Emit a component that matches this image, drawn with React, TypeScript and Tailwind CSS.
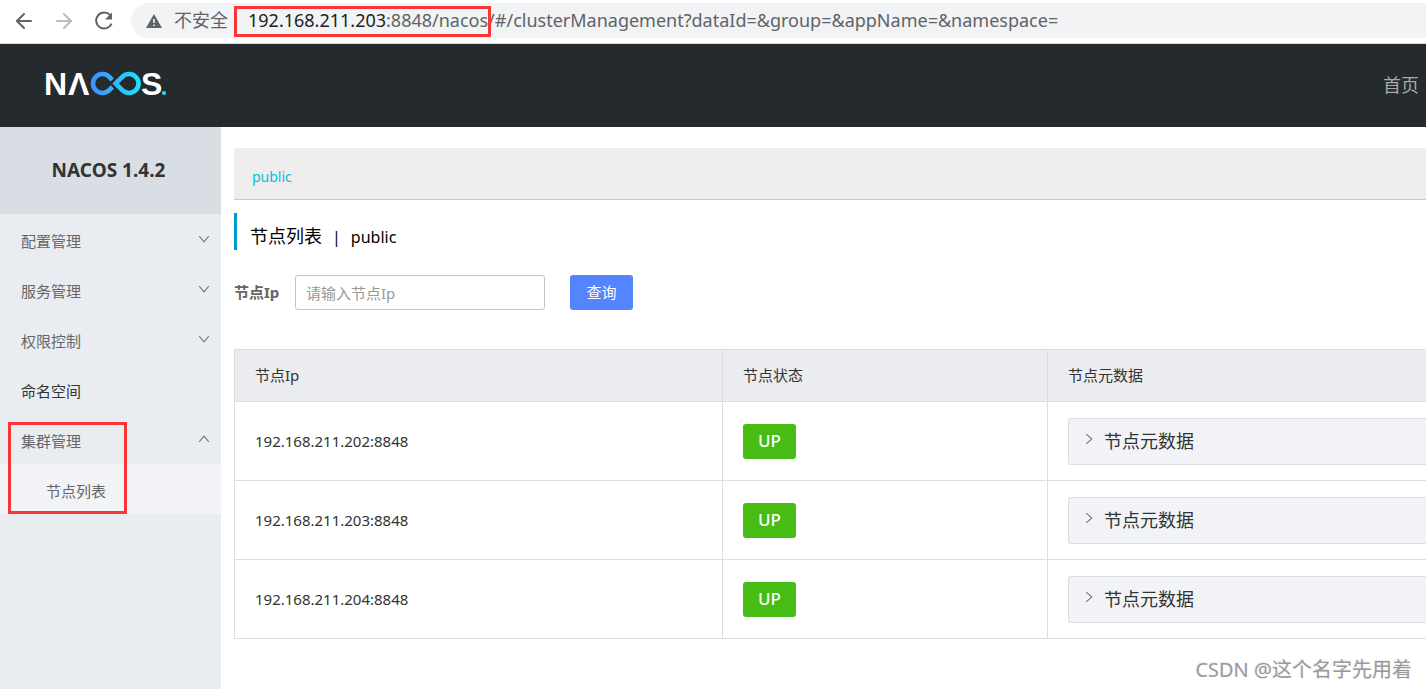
import React from 'react';
import { ArrowLeft, ArrowRight } from 'lucide-react';

interface MenuItem {
  label: string;
  state?: 'open' | 'closed';
  children?: string[];
}

interface ClusterNode {
  ip: string;
  status: string;
}

const menu: MenuItem[] = [
  { label: '配置管理', state: 'closed' },
  { label: '服务管理', state: 'closed' },
  { label: '权限控制', state: 'closed' },
  { label: '命名空间' },
  { label: '集群管理', state: 'open', children: ['节点列表'] },
];

const nodes: ClusterNode[] = [
  { ip: '192.168.211.202:8848', status: 'UP' },
  { ip: '192.168.211.203:8848', status: 'UP' },
  { ip: '192.168.211.204:8848', status: 'UP' },
];

const Chevron: React.FC<{ className?: string }> = ({ className = '' }) => (
  <svg
    width="12"
    height="12"
    viewBox="0 0 12 12"
    fill="none"
    stroke="currentColor"
    strokeWidth="1.1"
    className={`shrink-0 text-[#777] ${className}`}
  >
    <path d="M1.2 3.2 L6 8.8 L10.8 3.2" />
  </svg>
);

const NacosLogo: React.FC = () => (
  <svg width="128" height="44" viewBox="-2 -8 128 44" role="img" aria-label="NACOS">
    <defs>
      <linearGradient id="loop" gradientUnits="userSpaceOnUse" x1="46" y1="0" x2="96" y2="0">
        <stop offset="0" stopColor="#418dff" />
        <stop offset="1" stopColor="#1ce4f8" />
      </linearGradient>
    </defs>
    <g fill="#fff" fontFamily="Liberation Sans, sans-serif" fontWeight="700" fontSize="32">
      <text x="-1" y="25">N</text>
      <text x="23" y="25">Λ</text>
      <text x="96" y="25">S</text>
    </g>
    <g fill="none" stroke="url(#loop)" strokeWidth="4.6">
      <path d="M67.2 9.8 L64.2 6.8 A9.5 9.5 0 1 0 64.2 20.2 L67.4 17" />
      <path d="M70.6 13.5 L77.3 6.8 A9.5 9.5 0 1 1 77.3 20.2 Z" />
    </g>
    <circle cx="119" cy="23" r="2.1" fill="#1ce4f8" />
  </svg>
);

const BrowserBar: React.FC = () => (
  <div className="flex h-11 items-start border-b border-[#dadce0] bg-white pt-[3px] pl-3">
    <div className="flex h-[35px] w-[119px] shrink-0 items-center gap-4 text-[#5f6368]">
      <button type="button" aria-label="Back">
        <ArrowLeft size={24} strokeWidth={2} />
      </button>
      <button type="button" aria-label="Forward" className="text-[#babcbe]">
        <ArrowRight size={24} strokeWidth={2} />
      </button>
      <button type="button" aria-label="Reload">
        <svg width="24" height="24" viewBox="0 0 24 24" fill="none" stroke="currentColor" strokeWidth="2">
          <path d="M18.2 6.2 A8 8 0 1 0 19.6 14.6" />
          <path d="M20 3.5 V10.5 H13 Z" fill="currentColor" stroke="none" />
        </svg>
      </button>
    </div>
    <div className="relative flex h-[35px] min-w-0 flex-1 items-center rounded-l-full bg-[#f1f3f4] pl-[15px] text-[18px] whitespace-nowrap text-[#5f6368]">
      <button type="button" className="flex items-center gap-3">
        <svg width="16" height="14" viewBox="0 0 16 14">
          <path d="M8 0 L16 14 H0 Z" fill="#5f6368" />
          <path d="M7.2 5 H8.8 V9 H7.2 Z M7.2 10.4 H8.8 V12 H7.2 Z" fill="#f1f3f4" />
        </svg>
        不安全
      </button>
      <span className="ml-5">
        <span className="text-[#202124]">192.168.211.203</span>
        :8848/nacos/#/clusterManagement?dataId=&amp;group=&amp;appName=&amp;namespace=
      </span>
      <div className="absolute top-[3px] left-[103px] h-[31px] w-[257px] border-3 border-[#fb3536]" />
    </div>
  </div>
);

const Sidebar: React.FC = () => (
  <aside className="w-[221px] shrink-0 bg-[#e9edf2]">
    <h1 className="flex h-[87px] items-center justify-center bg-[#d9dde4] pr-1 text-[19px] font-bold text-[#333]">
      NACOS 1.4.2
    </h1>
    <ul className="text-[15px] text-[#666]">
      {menu.map((item) => (
        <li key={item.label} className="relative">
          <a
            href="#"
            className={`flex h-[50px] items-center justify-between pr-[11px] pl-[21px] ${item.state ? '' : 'text-[#333]'}`}
          >
            <span className="pt-1">{item.label}</span>
            {item.state === 'closed' && <Chevron />}
            {item.state === 'open' && <Chevron className="rotate-180" />}
          </a>
          {item.children && (
            <>
              <ul className="bg-[#f2f3f7]">
                {item.children.map((child) => (
                  <li key={child}>
                    <a href="#" className="flex h-[50px] items-center pl-[46px]">
                      <span className="pt-1">{child}</span>
                    </a>
                  </li>
                ))}
              </ul>
              <div className="absolute top-2 left-2 h-[92px] w-[119px] border-3 border-[#fb3536]" />
            </>
          )}
        </li>
      ))}
    </ul>
  </aside>
);

const NodeTable: React.FC = () => (
  <table className="mt-[39px] w-full table-fixed border-collapse border-l border-[#dcdee3] text-left text-[15px] text-[#333]">
    <thead>
      <tr className="h-[52px] border-y border-[#dcdee3] bg-[#ebecf0]">
        <th className="w-[488px] px-5 font-normal">节点Ip</th>
        <th className="w-[325px] border-x border-[#dcdee3] px-5 font-normal">节点状态</th>
        <th className="pl-5 font-normal">节点元数据</th>
      </tr>
    </thead>
    <tbody>
      {nodes.map((node) => (
        <tr key={node.ip} className="h-[79px] border-b border-[#dcdee3]">
          <td className="px-5">{node.ip}</td>
          <td className="border-x border-[#dcdee3] px-5">
            <span className="flex h-[35px] w-[53px] items-center justify-center rounded-[3px] bg-[#46bc15] text-[17px] font-medium text-white">
              {node.status}
            </span>
          </td>
          <td className="pl-5">
            <button
              type="button"
              className="flex h-[47px] w-full items-center gap-[9px] rounded-l-[3px] border border-r-0 border-[#dcdee3] bg-[#f2f3f7] pl-[14px] text-[18px]"
            >
              <Chevron className="mb-1 -rotate-90" />
              节点元数据
            </button>
          </td>
        </tr>
      ))}
    </tbody>
  </table>
);

const App: React.FC = () => {
  return (
    <div className="relative flex min-h-screen flex-col overflow-hidden bg-white font-['Noto_Sans','Noto_Sans_CJK_SC',sans-serif]">
      <BrowserBar />
      <header className="flex h-[83px] items-center justify-between bg-[#252a2f] pr-[7px] pl-[43px]">
        <a href="#" className="pb-1">
          <NacosLogo />
        </a>
        <a href="#" className="text-[18px] text-[#a8aaac]">
          首页
        </a>
      </header>
      <div className="flex flex-1">
        <Sidebar />
        <main className="min-w-0 flex-1 pt-[21px] pl-[13px]">
          <div className="flex h-[52px] items-center border-b border-[#ccc] bg-[#eee] pt-[6px] pl-[18px] text-[14px]">
            <a href="#" className="text-[#00c1de]">
              public
            </a>
          </div>
          <h2 className="mt-[13px] flex h-[37px] items-center gap-[10px] border-l-3 border-[#09c] pt-[10px] pl-[13px] text-[16px] text-black">
            <span className="text-[18px]">节点列表</span>
            <span>|</span>
            <span>public</span>
          </h2>
          <form className="mt-[25px] flex h-[35px] items-center text-[15px]">
            <label htmlFor="node-ip" className="w-[61px] font-bold text-[#666]">
              节点Ip
            </label>
            <input
              id="node-ip"
              type="text"
              placeholder="请输入节点Ip"
              className="h-[35px] w-[250px] rounded-[3px] border border-[#c4c6cf] px-[10px] placeholder:text-[#999]"
            />
            <button type="button" className="ml-[25px] h-[35px] w-[63px] rounded-[3px] bg-[#5584ff] text-white">
              查询
            </button>
          </form>
          <NodeTable />
        </main>
      </div>
      <div className="absolute right-[14px] bottom-1 text-[20px] text-[#999] [text-shadow:-1px_-1px_0_#eee]">
        CSDN @这个名字先用着
      </div>
    </div>
  );
};

export default App;
